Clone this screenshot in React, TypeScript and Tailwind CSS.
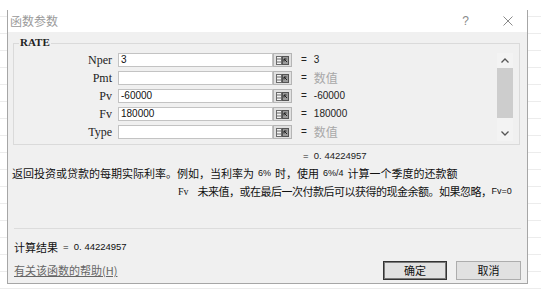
import * as React from 'react';

const args = [
    { name: 'Nper', value: '3', result: '3' },
    { name: 'Pmt', value: '', result: '' },
    { name: 'Pv', value: '-60000', result: '-60000' },
    { name: 'Fv', value: '180000', result: '180000' },
    { name: 'Type', value: '', result: '' },
];

const cjk = "font-['Noto_Sans_CJK_SC',sans-serif]";
const serif = "font-['Liberation_Serif','Noto_Sans_CJK_SC',serif]";
const sans = "font-['Liberation_Sans','Noto_Sans_CJK_SC',sans-serif]";

// little collapse-dialog icon on the right of each input
function RefIcon() {
    return (
        <svg width="13" height="9" viewBox="0 0 13 9">
            <rect x="0.5" y="0.5" width="5" height="8" fill="#f4f4f4" stroke="#6a6a6a" />
            <line x1="1" y1="3" x2="5" y2="3" stroke="#6a6a6a" />
            <line x1="1" y1="6" x2="5" y2="6" stroke="#6a6a6a" />
            <rect x="6.5" y="0.5" width="6" height="8" fill="#9a9a9a" stroke="#555" />
            <path d="M8 3 L11 6 M8 3 L8 5.5 M8 3 L10.5 3" stroke="#222" strokeWidth="1" fill="none" />
        </svg>
    );
}

function ArgRow({ name, value, result }: { name: string; value: string; result: string }) {
    return (
        <div className="flex items-center h-[14px]">
            <span className={`w-[98px] text-right text-[12px] leading-none text-[#222] ${serif}`}>{name}</span>
            <div className={`ml-[6px] w-[155px] h-[14px] bg-white border border-[#c3c3c3] flex items-center pl-[2px] text-[10px] leading-none text-[#111] ${sans}`}>
                {value}
            </div>
            <div className="w-[19px] h-[14px] bg-[#e1e1e1] border border-[#b5b5b5] flex items-center justify-center">
                <RefIcon />
            </div>
            <span className={`ml-[9px] text-[10px] leading-none text-[#222] ${sans}`}>=</span>
            {result ? (
                <span className={`ml-[7px] text-[10px] leading-none text-[#222] ${sans}`}>{result}</span>
            ) : (
                <span className={`ml-[7px] text-[12px] leading-none text-[#a8a8a8] ${cjk}`}>数值</span>
            )}
        </div>
    );
}

export default function App() {
    return (
        <div className="w-[541px] h-[294px] bg-white overflow-hidden pl-[7px] pt-[10px] bg-[repeating-linear-gradient(to_bottom,transparent_0px,transparent_16px,#ececec_16px,#ececec_17px)]">
            <div className="w-[521px] h-[274px] border border-[#a6a6a6] border-t-0 flex flex-col bg-white">
                {/* title bar */}
                <div className="h-[22px] flex items-center bg-white">
                    <span className={`ml-[2px] text-[12px] text-[#9a9a9a] ${cjk}`}>函数参数</span>
                    <span className={`ml-auto text-[12px] text-[#8a8a8a] ${sans}`}>?</span>
                    <svg className="ml-[34px] mr-[14px]" width="10" height="10" viewBox="0 0 10 10">
                        <path d="M0.5 0.5 L9.5 9.5 M9.5 0.5 L0.5 9.5" stroke="#8a8a8a" strokeWidth="1" />
                    </svg>
                </div>

                {/* body */}
                <div className="flex-1 bg-[#f0f0f0] flex flex-col">
                    {/* RATE group */}
                    <div className="relative mt-[11px] ml-[5px] mr-[7px] h-[102px] border border-[#dadada] flex">
                        <span className={`absolute left-[5px] top-[-7px] px-[1px] bg-[#f0f0f0] text-[11px] leading-none font-bold text-[#222] ${serif}`}>
                            RATE
                        </span>
                        <div className="flex-1 flex flex-col gap-[4px] pt-[9px]">
                            {args.map((a) => (
                                <ArgRow key={a.name} {...a} />
                            ))}
                        </div>
                        {/* scrollbar */}
                        <div className="mt-[9px] mr-[6px] w-[16px] h-[88px] bg-[#f3f3f3] flex flex-col items-center">
                            <div className="h-[15px] flex items-center justify-center">
                                <svg width="8" height="5" viewBox="0 0 8 5">
                                    <path d="M0.5 4.5 L4 1 L7.5 4.5" stroke="#555" strokeWidth="1.3" fill="none" />
                                </svg>
                            </div>
                            <div className="w-[16px] h-[50px] bg-[#cdcdcd]" />
                            <div className="flex-1 flex items-end justify-center pb-[5px]">
                                <svg width="8" height="5" viewBox="0 0 8 5">
                                    <path d="M0.5 0.5 L4 4 L7.5 0.5" stroke="#555" strokeWidth="1.3" fill="none" />
                                </svg>
                            </div>
                        </div>
                    </div>

                    {/* result of formula */}
                    <div className={`mt-[5px] pl-[295px] h-[12px] flex items-center text-[9.5px] leading-none text-[#222] whitespace-pre ${sans}`}>
                        {'=  0. 44224957'}
                    </div>

                    {/* description */}
                    <div className={`mt-[4px] pl-[4px] h-[15px] flex items-center text-[11px] leading-none text-[#111] whitespace-nowrap ${cjk}`}>
                        返回投资或贷款的每期实际利率。例如，当利率为<span className={`mx-[4px] text-[9px] ${sans}`}>6%</span>时，使用<span className={`mx-[4px] text-[9px] ${sans}`}>6%/4</span>计算一个季度的还款额
                    </div>
                    <div className={`mt-[3px] pl-[170px] h-[15px] flex items-center text-[11px] leading-none text-[#111] whitespace-nowrap tracking-[-0.5px] ${cjk}`}>
                        <span className={`mr-[9px] text-[10px] tracking-normal ${serif}`}>Fv</span>
                        未来值，或在最后一次付款后可以获得的现金余额。如果忽略，<span className={`text-[9px] tracking-normal ${sans}`}>Fv=0</span>
                    </div>

                    {/* separator */}
                    <div className="mt-[29px] mx-[6px] h-[1px] bg-[#dcdcdc]" />

                    <div className={`mt-[11px] pl-[6px] h-[14px] flex items-center text-[11px] leading-none text-[#111] whitespace-pre ${cjk}`}>
                        计算结果<span className={`ml-[5px] text-[9.5px] ${sans}`}>{'=  0. 44224957'}</span>
                    </div>

                    <div className="mt-[7px] flex items-center pl-[6px] pr-[6px]">
                        <span className={`text-[11px] leading-none text-[#666] underline ${cjk}`}>有关该函数的帮助(H)</span>
                        <button className={`ml-auto w-[64px] h-[19px] bg-[#e1e1e1] border border-[#333] shadow-[inset_0_0_0_1px_#7a7a7a] text-[11px] leading-none text-[#111] ${cjk}`}>
                            确定
                        </button>
                        <button className={`ml-[9px] w-[65px] h-[19px] bg-[#e1e1e1] border border-[#adadad] text-[11px] leading-none text-[#111] ${cjk}`}>
                            取消
                        </button>
                    </div>
                </div>
            </div>
        </div>
    );
}
